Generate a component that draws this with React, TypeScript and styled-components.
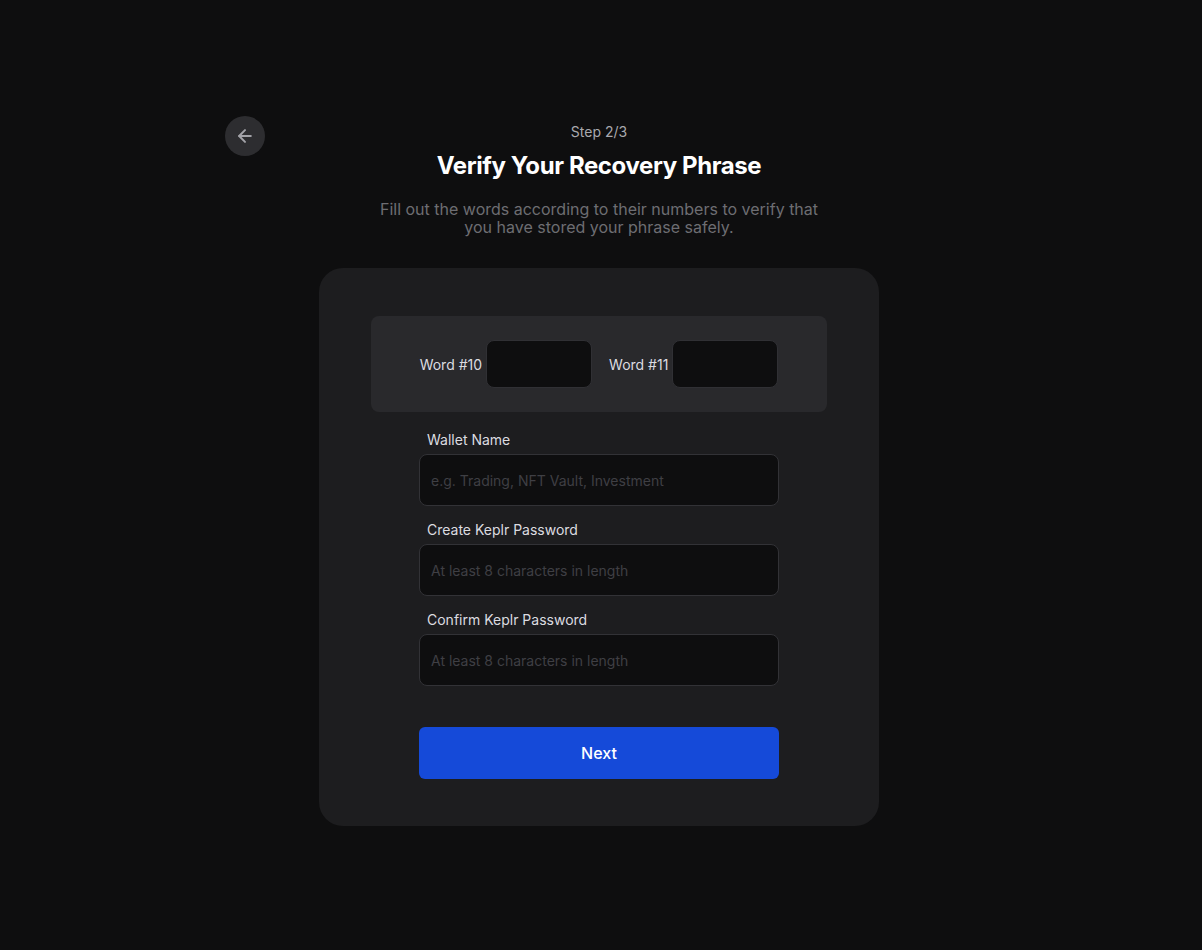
import styled, { createGlobalStyle } from 'styled-components';
import { ArrowLeft } from 'lucide-react';

const GlobalStyle = createGlobalStyle`
  html, body {
    margin: 0;
    padding: 0;
    background: #0e0e0f;
  }
  body {
    font-family: Inter, 'Noto Sans', sans-serif;
    -webkit-font-smoothing: antialiased;
  }
  * {
    box-sizing: border-box;
  }
`;

const Page = styled.div`
  min-height: 950px;
  display: flex;
  justify-content: center;
  padding: 116px 4px 0 0;
`;

const Container = styled.div`
  width: 748px;
  display: flex;
  flex-direction: column;
  align-items: center;
`;

const Header = styled.div`
  width: 100%;
  display: grid;
  grid-template-columns: 40px 1fr 40px;
`;

const BackButton = styled.button`
  width: 40px;
  height: 40px;
  border-radius: 50%;
  border: none;
  background: #2d2d30;
  color: #a3a3a8;
  display: flex;
  align-items: center;
  justify-content: center;
  padding: 0;
  cursor: pointer;
`;

const HeaderText = styled.div`
  display: flex;
  flex-direction: column;
  align-items: center;
  padding-top: 8px;
`;

const Step = styled.div`
  font-size: 14px;
  line-height: 16px;
  color: #a9a9ae;
`;

const Title = styled.h1`
  margin: 11px 0 0;
  font-size: 24px;
  line-height: 30px;
  font-weight: 700;
  color: #ffffff;
  letter-spacing: -0.4px;
`;

const Subtitle = styled.p`
  margin: 19px 0 0;
  max-width: 460px;
  text-align: center;
  font-size: 16px;
  line-height: 18px;
  color: #6d6d72;
`;

const Card = styled.div`
  margin-top: 32px;
  width: 560px;
  background: #1d1d1f;
  border-radius: 24px;
  padding: 48px 52px 47px;
  display: flex;
  flex-direction: column;
  align-items: center;
`;

const WordBox = styled.div`
  width: 100%;
  height: 96px;
  background: #29292c;
  border-radius: 8px;
  display: flex;
  align-items: center;
  justify-content: center;
  gap: 17px;
`;

const WordItem = styled.label`
  display: flex;
  align-items: center;
  gap: 4px;
  font-size: 14px;
  color: #dcdce0;
`;

const WordInput = styled.input`
  width: 106px;
  height: 48px;
  border-radius: 8px;
  border: 1px solid #303034;
  background: #0e0e0f;
  outline: none;
  color: #fff;
  padding: 0 10px;
  font-family: inherit;
`;

const Form = styled.div`
  width: 360px;
  display: flex;
  flex-direction: column;
  margin-top: 18px;
`;

const Field = styled.div<{ $first?: boolean }>`
  display: flex;
  flex-direction: column;
  gap: 4px;
  margin-top: ${props => (props.$first ? '0' : '14px')};
`;

const Label = styled.label`
  padding-left: 8px;
  font-size: 14px;
  line-height: 20px;
  font-weight: 400;
  color: #dcdce0;
`;

const TextInput = styled.input`
  height: 52px;
  border-radius: 8px;
  border: 1px solid #323236;
  background: #0e0e0f;
  padding: 0 11px;
  font-family: inherit;
  font-size: 14px;
  color: #fff;
  outline: none;

  &::placeholder {
    color: #3f3f44;
  }
`;

const NextButton = styled.button`
  margin-top: 41px;
  height: 52px;
  border: none;
  border-radius: 6px;
  background: #154ad9;
  color: #ffffff;
  font-family: inherit;
  font-size: 16px;
  font-weight: 500;
  cursor: pointer;
`;

const fields = [
  { label: 'Wallet Name', placeholder: 'e.g. Trading, NFT Vault, Investment', type: 'text' },
  { label: 'Create Keplr Password', placeholder: 'At least 8 characters in length', type: 'password' },
  { label: 'Confirm Keplr Password', placeholder: 'At least 8 characters in length', type: 'password' },
];

export default function App() {
  return (
    <>
      <GlobalStyle />
      <Page>
        <Container>
          <Header>
            <BackButton aria-label="Back">
              <ArrowLeft size={20} strokeWidth={2.4} />
            </BackButton>
            <HeaderText>
              <Step>Step 2/3</Step>
              <Title>Verify Your Recovery Phrase</Title>
              <Subtitle>
                Fill out the words according to their numbers to verify that you have stored your phrase safely.
              </Subtitle>
            </HeaderText>
            <div />
          </Header>
          <Card>
            <WordBox>
              <WordItem>
                Word #10
                <WordInput />
              </WordItem>
              <WordItem>
                Word #11
                <WordInput />
              </WordItem>
            </WordBox>
            <Form>
              {fields.map((f, i) => (
                <Field key={f.label} $first={i === 0}>
                  <Label>{f.label}</Label>
                  <TextInput type={f.type} placeholder={f.placeholder} />
                </Field>
              ))}
              <NextButton>Next</NextButton>
            </Form>
          </Card>
        </Container>
      </Page>
    </>
  );
}
